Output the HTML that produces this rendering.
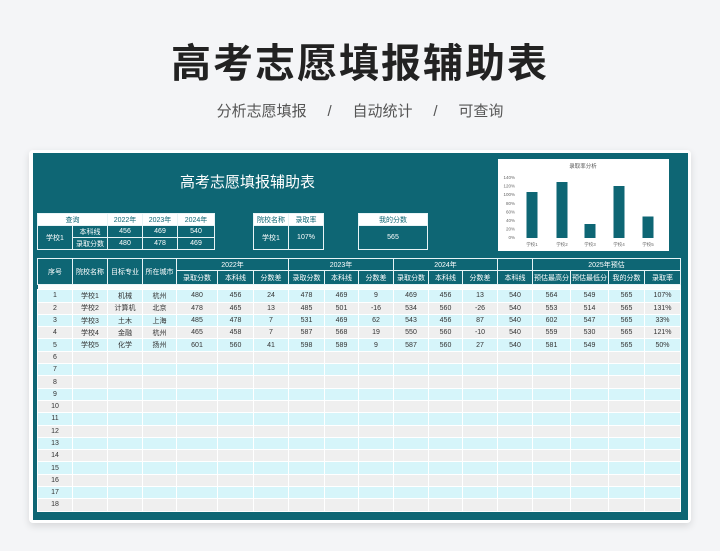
<!DOCTYPE html>
<html><head><meta charset="utf-8"><style>
*{margin:0;padding:0;box-sizing:border-box}
body{width:720px;height:551px;background:#f4f5f7;font-family:"Liberation Sans","Noto Sans CJK SC",sans-serif;position:relative;overflow:hidden}
.h1{position:absolute;top:31px;left:0;width:720px;text-align:center;font-size:40px;font-weight:bold;color:#222;letter-spacing:2px}
.sub{position:absolute;top:100px;left:0;width:720px;text-align:center;font-size:15px;color:#555;word-spacing:0}
.card{position:absolute;left:29px;top:150px;width:662px;height:373px;background:#fff;border-radius:4px;box-shadow:0 3px 8px rgba(0,0,0,.12)}
.panel{position:absolute;left:33px;top:153px;width:655px;height:367px;background:#0e6674}
.t{position:absolute;color:#fff;font-size:15px;left:180px;top:171px}
table{position:absolute;border-collapse:collapse;table-layout:fixed;font-size:7px;text-align:center}
td{border:1px solid #e8f4f6;overflow:hidden;white-space:nowrap;padding:0}
.tl td{color:#fff}
.tl td.w{background:#fff;color:#0e6674}
.main td{height:12.3px;color:#333;border:1px solid #fff}
.main .hd td{background:#0e6674;color:#fff;border:1px solid #e8f4f6}
.o td{background:#d6f5fa}.e td{background:#efefef}
.chart{position:absolute;left:498px;top:159px;width:171px;height:92px;background:#fff}
</style></head><body>
<div class="h1">高考志愿填报辅助表</div>
<div class="sub">分析志愿填报&nbsp;&nbsp;&nbsp;&nbsp;&nbsp;/&nbsp;&nbsp;&nbsp;&nbsp;&nbsp;自动统计&nbsp;&nbsp;&nbsp;&nbsp;&nbsp;/&nbsp;&nbsp;&nbsp;&nbsp;&nbsp;可查询</div>
<div class="card"></div>
<div class="panel"></div>
<div class="t">高考志愿填报辅助表</div>

<table class="tl" style="left:37px;top:213px;width:177px">
<col style="width:35px"><col style="width:35px"><col style="width:35px"><col style="width:35px"><col style="width:37px">
<tr style="height:12px"><td class="w" colspan="2">查询</td><td class="w">2022年</td><td class="w">2023年</td><td class="w">2024年</td></tr>
<tr style="height:12px"><td rowspan="2">学校1</td><td>本科线</td><td>456</td><td>469</td><td>540</td></tr>
<tr style="height:12px"><td>录取分数</td><td>480</td><td>478</td><td>469</td></tr>
</table>
<table class="tl" style="left:253px;top:213px;width:70px">
<col style="width:35px"><col style="width:35px">
<tr style="height:12px"><td class="w">院校名称</td><td class="w">录取率</td></tr>
<tr style="height:24px"><td>学校1</td><td>107%</td></tr>
</table>
<table class="tl" style="left:358px;top:213px;width:70px">
<tr style="height:12px"><td class="w">我的分数</td></tr>
<tr style="height:24px"><td>565</td></tr>
</table>

<div class="chart">
<svg width="171" height="92" style="font-family:'Liberation Sans','Noto Sans CJK SC',sans-serif">
<text x="85" y="9" font-size="5.5" fill="#555" text-anchor="middle">录取率分析</text>
<g font-size="4.5" fill="#666" text-anchor="end">
<text x="17" y="20">140%</text><text x="17" y="28.6">120%</text><text x="17" y="37.2">100%</text><text x="17" y="45.8">80%</text><text x="17" y="54.4">60%</text><text x="17" y="63">40%</text><text x="17" y="71.6">20%</text><text x="17" y="80.2">0%</text>
</g>
<g fill="#0e6674">
<rect x="28.5" y="33" width="11" height="46"/>
<rect x="58.5" y="23" width="11" height="56"/>
<rect x="86.5" y="65" width="11" height="14"/>
<rect x="115.5" y="27" width="11" height="52"/>
<rect x="144.5" y="57.5" width="11" height="21.5"/>
</g>
<g font-size="4.5" fill="#666" text-anchor="middle">
<text x="34" y="87">学校1</text><text x="64" y="87">学校2</text><text x="92" y="87">学校3</text><text x="121" y="87">学校4</text><text x="150" y="87">学校5</text>
</g>
</svg>
</div>

<table class="main" style="left:37px;top:258px;width:643px">
<col style="width:35px"><col style="width:35px"><col style="width:35px"><col style="width:34px">
<col style="width:41px"><col style="width:36px"><col style="width:35px">
<col style="width:36px"><col style="width:34px"><col style="width:35px">
<col style="width:35px"><col style="width:34px"><col style="width:35px">
<col style="width:35px"><col style="width:38px"><col style="width:38px"><col style="width:36px"><col style="width:36px">
<tr class="hd" style="height:11px"><td rowspan="2">序号</td><td rowspan="2">院校名称</td><td rowspan="2">目标专业</td><td rowspan="2">所在城市</td><td colspan="3">2022年</td><td colspan="3">2023年</td><td colspan="3">2024年</td><td></td><td colspan="4">2025年预估</td></tr>
<tr class="hd" style="height:14px"><td>录取分数</td><td>本科线</td><td>分数差</td><td>录取分数</td><td>本科线</td><td>分数差</td><td>录取分数</td><td>本科线</td><td>分数差</td><td>本科线</td><td>预估最高分</td><td>预估最低分</td><td>我的分数</td><td>录取率</td></tr>
<tr style="height:5px"><td colspan="18" style="height:5px;background:#fbfdfd;border:none"></td></tr>
<tr class="o"><td>1</td><td>学校1</td><td>机械</td><td>杭州</td><td>480</td><td>456</td><td>24</td><td>478</td><td>469</td><td>9</td><td>469</td><td>456</td><td>13</td><td>540</td><td>564</td><td>549</td><td>565</td><td>107%</td></tr>
<tr class="e"><td>2</td><td>学校2</td><td>计算机</td><td>北京</td><td>478</td><td>465</td><td>13</td><td>485</td><td>501</td><td>-16</td><td>534</td><td>560</td><td>-26</td><td>540</td><td>553</td><td>514</td><td>565</td><td>131%</td></tr>
<tr class="o"><td>3</td><td>学校3</td><td>土木</td><td>上海</td><td>485</td><td>478</td><td>7</td><td>531</td><td>469</td><td>62</td><td>543</td><td>456</td><td>87</td><td>540</td><td>602</td><td>547</td><td>565</td><td>33%</td></tr>
<tr class="e"><td>4</td><td>学校4</td><td>金融</td><td>杭州</td><td>465</td><td>458</td><td>7</td><td>587</td><td>568</td><td>19</td><td>550</td><td>560</td><td>-10</td><td>540</td><td>559</td><td>530</td><td>565</td><td>121%</td></tr>
<tr class="o"><td>5</td><td>学校5</td><td>化学</td><td>扬州</td><td>601</td><td>560</td><td>41</td><td>598</td><td>589</td><td>9</td><td>587</td><td>560</td><td>27</td><td>540</td><td>581</td><td>549</td><td>565</td><td>50%</td></tr>
<tr class="e"><td>6</td><td></td><td></td><td></td><td></td><td></td><td></td><td></td><td></td><td></td><td></td><td></td><td></td><td></td><td></td><td></td><td></td><td></td></tr>
<tr class="o"><td>7</td><td></td><td></td><td></td><td></td><td></td><td></td><td></td><td></td><td></td><td></td><td></td><td></td><td></td><td></td><td></td><td></td><td></td></tr>
<tr class="e"><td>8</td><td></td><td></td><td></td><td></td><td></td><td></td><td></td><td></td><td></td><td></td><td></td><td></td><td></td><td></td><td></td><td></td><td></td></tr>
<tr class="o"><td>9</td><td></td><td></td><td></td><td></td><td></td><td></td><td></td><td></td><td></td><td></td><td></td><td></td><td></td><td></td><td></td><td></td><td></td></tr>
<tr class="e"><td>10</td><td></td><td></td><td></td><td></td><td></td><td></td><td></td><td></td><td></td><td></td><td></td><td></td><td></td><td></td><td></td><td></td><td></td></tr>
<tr class="o"><td>11</td><td></td><td></td><td></td><td></td><td></td><td></td><td></td><td></td><td></td><td></td><td></td><td></td><td></td><td></td><td></td><td></td><td></td></tr>
<tr class="e"><td>12</td><td></td><td></td><td></td><td></td><td></td><td></td><td></td><td></td><td></td><td></td><td></td><td></td><td></td><td></td><td></td><td></td><td></td></tr>
<tr class="o"><td>13</td><td></td><td></td><td></td><td></td><td></td><td></td><td></td><td></td><td></td><td></td><td></td><td></td><td></td><td></td><td></td><td></td><td></td></tr>
<tr class="e"><td>14</td><td></td><td></td><td></td><td></td><td></td><td></td><td></td><td></td><td></td><td></td><td></td><td></td><td></td><td></td><td></td><td></td><td></td></tr>
<tr class="o"><td>15</td><td></td><td></td><td></td><td></td><td></td><td></td><td></td><td></td><td></td><td></td><td></td><td></td><td></td><td></td><td></td><td></td><td></td></tr>
<tr class="e"><td>16</td><td></td><td></td><td></td><td></td><td></td><td></td><td></td><td></td><td></td><td></td><td></td><td></td><td></td><td></td><td></td><td></td><td></td></tr>
<tr class="o"><td>17</td><td></td><td></td><td></td><td></td><td></td><td></td><td></td><td></td><td></td><td></td><td></td><td></td><td></td><td></td><td></td><td></td><td></td></tr>
<tr class="e"><td>18</td><td></td><td></td><td></td><td></td><td></td><td></td><td></td><td></td><td></td><td></td><td></td><td></td><td></td><td></td><td></td><td></td><td></td></tr>
</table>
</body></html>
